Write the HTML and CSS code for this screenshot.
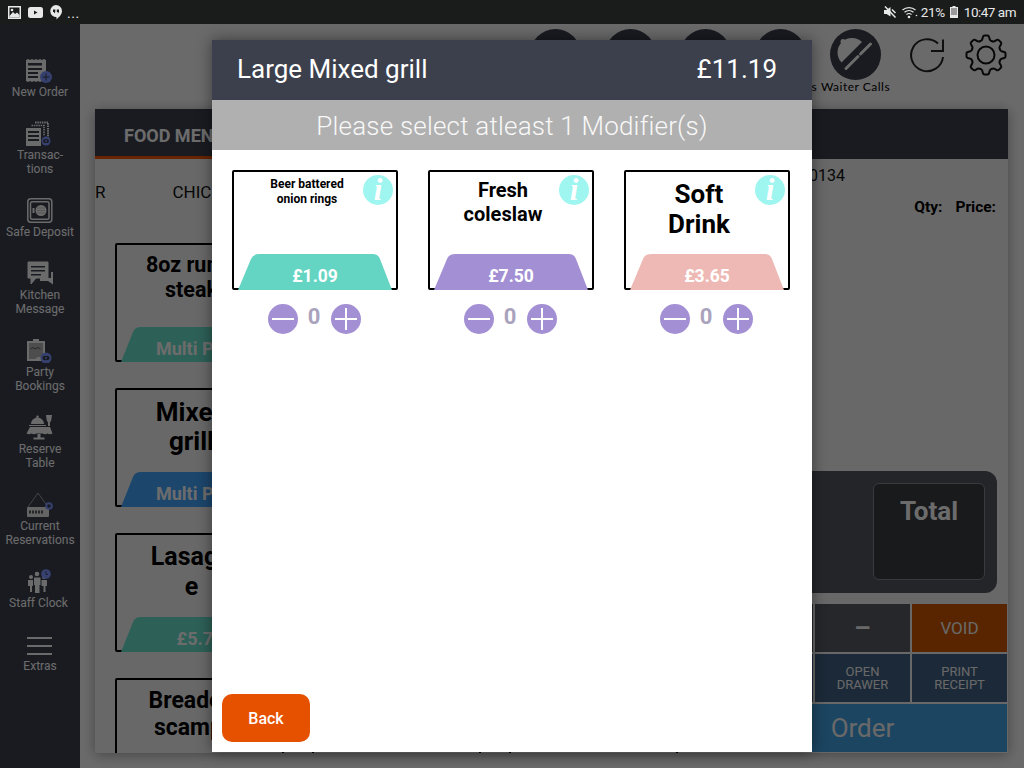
FILE: index.html
```html
<!DOCTYPE html>
<html lang="en">
<head>
<meta charset="utf-8">
<title>Large Mixed grill</title>
<link rel="stylesheet" href="styles.css">
</head>
<body>
<div class="screen">
  <div class="status">
    <div class="status-left">
      <svg class="st-ic" width="13" height="13" viewBox="0 0 13 13"><path d="M0 0H13V13H0Z" fill="#e8e8e8"/><path d="M1.5 1.5H11.500V11.500H1.500Z" fill="#1a1c1c"/><path d="M1.500 10L5 6L7 8L9 6.500L11.500 9V11.500H1.500Z" fill="#e8e8e8"/><circle cx="4" cy="4" r="1.300" fill="#e8e8e8"/></svg>
      <svg class="st-ic" width="15" height="11" viewBox="0 0 15 11"><rect width="15" height="11" rx="2.500" fill="#e8e8e8"/><path d="M6 3.500L9.500 5.500L6 7.500Z" fill="#1a1c1c"/></svg>
      <svg class="st-ic" width="12" height="15" viewBox="0 0 12 15"><path d="M6 0A6 6 0 0 1 12 6C12 9.500 9 12 6.500 14.500V12A6 6 0 0 1 6 0Z" fill="#e8e8e8"/><path d="M3 4.500H5.300V7L4 8.500V7H3ZM6.800 4.500H9V7L7.800 8.500V7H6.800Z" fill="#1a1c1c"/></svg>
      <span class="st-more">...</span>
    </div>
    <div class="status-right">
      <svg class="st-mute" width="12" height="12" viewBox="0 0 12 12"><path d="M0 4H2.500L6.500 1V10.500L2.500 8H0Z" fill="#e8e8e8"/><path d="M1 0.500L11.500 11.500" stroke="#e8e8e8" stroke-width="1.500"/><path d="M8 3.500L11.500 7" stroke="#e8e8e8" stroke-width="1.500"/></svg>
      <svg class="st-wifi" width="16" height="13" viewBox="0 0 16 13"><g fill="none" stroke="#e8e8e8" stroke-width="1.200"><path d="M0.500 4A10 10 0 0 1 13.500 4"/><path d="M2.500 6.300A7 7 0 0 1 11.500 6.300"/><path d="M4.500 8.500A4 4 0 0 1 9.500 8.500"/></g><circle cx="7" cy="11" r="1.300" fill="#e8e8e8"/><circle cx="14.500" cy="9.500" r="0.800" fill="#e8e8e8"/></svg>
      <span class="st-pct">21%</span>
      <svg class="st-batt" width="8" height="12" viewBox="0 0 8 12"><path d="M2.500 0H5.500V1H8V12H0V1H2.500Z" fill="#e8e8e8"/><path d="M1 2H7V9H1Z" fill="#9a9a9a"/></svg>
      <span class="st-time">10:47 am</span>
    </div>
  </div>

  <div class="app">
    <nav class="side">
      <div class="side-item">
        <svg class="side-ic" width="30" height="25" viewBox="0 0 30 25"><path d="M1 2L3 1L5 2L7 1L9 2L11 1L13 2L15 1L17 2L19 1L21 2V23L19 24L17 23L15 24L13 23L11 24L9 23L7 24L5 23L3 24L1 23Z" fill="#eee"/><path d="M3 5H17V7.500H3ZM3 10H17V12H3ZM3 14H13V16H3ZM3 18H13V20H3Z" fill="#383c49"/><circle cx="21" cy="19" r="6" fill="#7b91f5"/><path d="M21 15.500V22.500M17.500 19H24.500" stroke="#383c49" stroke-width="1"/></svg>
        <span>New Order</span>
      </div>
      <div class="side-item">
        <svg class="side-ic" width="30" height="25" viewBox="0 0 30 25"><path d="M10 1.500H23V17" fill="none" stroke="#eee" stroke-width="2" stroke-dasharray="1.500 .8"/><path d="M6.500 4.500H19V15" fill="none" stroke="#eee" stroke-width="1.500" stroke-dasharray="1.500 .8"/><path d="M1 7H16V25H1Z" fill="#eee"/><path d="M3 10H14V12H3ZM3 14H14V16H3ZM3 18H14V20H3Z" fill="#383c49"/><circle cx="21" cy="20" r="4.500" fill="#7b91f5"/><ellipse cx="21" cy="20" rx="3" ry="2" fill="#383c49"/><circle cx="21" cy="20" r="1" fill="#7b91f5"/></svg>
        <span>Transac-<br>tions</span>
      </div>
      <div class="side-item">
        <svg class="side-ic" width="30" height="25" viewBox="0 0 30 25"><rect x="2.800" y="0.800" width="24" height="23.500" rx="3" fill="none" stroke="#eee" stroke-width="1.500"/><rect x="5.500" y="3.800" width="18.500" height="17.500" rx="1.500" fill="none" stroke="#eee" stroke-width="1.500"/><circle cx="16" cy="12.500" r="5.500" fill="#eee"/><rect x="7.500" y="10" width="2" height="5" fill="#eee"/><path d="M12 10H20M12 12.500H20M12 15H20" stroke="#aaa" stroke-width=".7"/></svg>
        <span>Safe Deposit</span>
      </div>
      <div class="side-item">
        <svg class="side-ic" width="30" height="25" viewBox="0 0 30 25"><path d="M26 11H28V23.500L23 20H15V17H26Z" fill="#eee"/><path d="M3 1H23V17H11L6 23V17H3Z" fill="#eee" stroke="#eee" stroke-linejoin="round"/><path d="M6 5H20V6.500H6ZM6 9H20V10.500H6ZM6 13H16V14.500H6Z" fill="#383c49"/></svg>
        <span>Kitchen<br>Message</span>
      </div>
      <div class="side-item">
        <svg class="side-ic" width="30" height="25" viewBox="0 0 30 25"><path d="M2 3H8V1H14V3H20V23H2Z" fill="#eee"/><path d="M4 5H18V19H13L10 21H4Z" fill="#aaa"/><path d="M5.500 11L8 9.500L10 11L13 9.500L15.500 11" fill="none" stroke="#444" stroke-width=".8"/><circle cx="21" cy="20" r="5.500" fill="#7b91f5"/><ellipse cx="21" cy="20" rx="3.500" ry="2.200" fill="#383c49"/><circle cx="21" cy="20" r="1" fill="#7b91f5"/></svg>
        <span>Party<br>Bookings</span>
      </div>
      <div class="side-item">
        <svg class="side-ic" width="30" height="25" viewBox="0 0 30 25"><path d="M6 9A6.500 6.500 0 0 1 19 9Z" fill="#eee"/><circle cx="12.500" cy="1.800" r="1.300" fill="#eee"/><path d="M4 10H21V11H4Z" fill="#eee"/><path d="M5 12H25L27.500 18.500Q25 20 22.500 18.500Q20 20 17.500 18.500H11.500Q9 20 6.500 18.500Q4 20 1.500 18.500Z" fill="#eee"/><path d="M12.500 19H15.500V22.500H12.500ZM8.500 22.500H19.500V24.500H8.500Z" fill="#eee"/><path d="M21 0H27L26.300 5Q26 7 25 7V11H23V7Q22 7 21.700 5Z" fill="#eee"/></svg>
        <span>Reserve<br>Table</span>
      </div>
      <div class="side-item">
        <svg class="side-ic" width="30" height="25" viewBox="0 0 30 25"><path d="M3 15L13 1L23 15" fill="none" stroke="#bbb" stroke-width=".7"/><rect x="2" y="15" width="22" height="10" rx="1" fill="#ddd"/><path d="M4 18.500H6V21.500H4ZM7 18.500H9V21.500H7ZM10 18.500H12V21.500H10ZM13 18.500H15V21.500H13ZM16 18.500H18V21.500H16Z" fill="#555"/><circle cx="24" cy="14" r="3.800" fill="#7b91f5"/><circle cx="24" cy="14" r="1.800" fill="#383c49"/></svg>
        <span>Current<br>Reservations</span>
      </div>
      <div class="side-item">
        <svg class="side-ic" width="30" height="25" viewBox="0 0 30 25"><circle cx="12" cy="5" r="2.300" fill="#eee"/><circle cx="6" cy="8" r="2" fill="#eee"/><circle cx="19" cy="8" r="2" fill="#eee"/><path d="M9 8.500H15.500V16H14.500V24H10V16H9Z" fill="#eee"/><path d="M3 11H8V17H7V23H5V17H3ZM16.500 11H22V17H20.500V23H18.500V17H16.500Z" fill="#eee"/><circle cx="21" cy="5" r="4.800" fill="#7b91f5"/><path d="M21 2.500V5.500H23" fill="none" stroke="#383c49" stroke-width=".9"/></svg>
        <span class="staff-label">Staff Clock</span>
      </div>
      <div class="side-item">
        <svg class="side-ic" width="30" height="25" viewBox="0 0 30 25"><path d="M2 5H27V7H2ZM2 13H27V15H2ZM2 21H27V23H2Z" fill="#eee"/></svg>
        <span>Extras</span>
      </div>
    </nav>

    <main class="main">
      <header class="tools">
        <div class="tool"><div class="tool-disc"></div></div>
        <div class="tool"><div class="tool-disc"></div></div>
        <div class="tool"><div class="tool-disc"></div></div>
        <div class="tool"><div class="tool-disc"></div><span class="tool-label">Reservations</span></div>
        <div class="tool">
          <div class="tool-disc">
            <svg width="51" height="51" viewBox="0 0 51 51"><path d="M11.500 33.500A14.500 14.500 0 0 1 32 13Z" fill="#f0f0f0"/><circle cx="13" cy="12.500" r="2.500" fill="#f0f0f0"/><path d="M16 39.500L28 27.500M30.500 25L40.500 15" stroke="#f0f0f0" stroke-width="3" stroke-linecap="round"/></svg>
          </div>
          <span class="tool-label">Waiter Calls</span>
        </div>
        <svg class="refresh" width="36" height="36" viewBox="0 0 36 36"><path d="M34 20A16 16 0 1 1 29 6.500M34 2.500V14H22" fill="none" stroke="#222" stroke-width="2"/></svg>
        <svg class="gear" width="42" height="42" viewBox="-21 -21 42 42"><defs><path id="tooth" d="M-5.740-13.860Q-4-14.500-3.800-15.500L-3-18.300Q-2.700-19.500-1.500-19.500H1.500Q2.700-19.500 3-18.300L3.800-15.500Q4-14.500 5.740-13.860"/></defs><g fill="none" stroke="#111" stroke-width="2" stroke-linecap="round"><use href="#tooth"/><use href="#tooth" transform="rotate(45)"/><use href="#tooth" transform="rotate(90)"/><use href="#tooth" transform="rotate(135)"/><use href="#tooth" transform="rotate(180)"/><use href="#tooth" transform="rotate(225)"/><use href="#tooth" transform="rotate(270)"/><use href="#tooth" transform="rotate(315)"/><circle r="8.500"/></g></svg>
      </header>

      <section class="panel">
        <div class="tabs"><div class="tab">FOOD MENU</div></div>
        <div class="panel-body">
          <div class="menu">
            <div class="cats"><span class="cat">R</span><span class="cat">CHICKEN</span></div>
            <div class="grid">
              <div class="card"><div class="card-name n22">8oz rump<br>steak</div><div class="band teal">Multi Price</div></div>
              <div class="card"></div><div class="card"></div>
              <div class="card"><div class="card-name n26">Mixed<br>grill</div><div class="band blue">Multi Price</div></div>
              <div class="card"></div><div class="card"></div>
              <div class="card"><div class="card-name n25">Lasagn<br>e</div><div class="band teal">£5.75</div></div>
              <div class="card"></div><div class="card"></div>
              <div class="card"><div class="card-name n23">Breaded<br>scampi</div></div>
              <div class="card"></div><div class="card"></div>
            </div>
          </div>
          <aside class="order">
            <div class="order-ref">0134</div>
            <div class="order-cols"><span>Qty:</span><span>Price:</span></div>
            <div class="totals"><div class="total-box">Total</div></div>
            <div class="keys">
              <div class="key k-grey">+</div>
              <div class="key k-grey k-big">–</div>
              <div class="key k-void">VOID</div>
              <div class="key k-navy">DISCOUNT</div>
              <div class="key k-navy">OPEN<br>DRAWER</div>
              <div class="key k-navy">PRINT<br>RECEIPT</div>
              <div class="key k-order">Order</div>
            </div>
          </aside>
        </div>
      </section>
    </main>
  </div>

  <div class="scrim"></div>

  <div class="modal">
    <div class="m-head"><span>Large Mixed grill</span><span class="m-price">£11.19</span></div>
    <div class="m-sub">Please select atleast 1 Modifier(s)</div>
    <div class="m-body">
      <div class="mods">
        <div class="mod">
          <div class="mod-card">
            <div class="mod-name s12">Beer battered<br>onion rings</div>
            <div class="info">i</div>
            <div class="price p-teal">£1.09</div>
          </div>
          <div class="stepper">
            <svg class="step" width="30" height="30" viewBox="0 0 30 30"><circle cx="15" cy="15" r="15" fill="#a38fd3"/><path d="M4 15H26" stroke="#fff" stroke-width="2"/></svg>
            <span class="qty">0</span>
            <svg class="step" width="30" height="30" viewBox="0 0 30 30"><circle cx="15" cy="15" r="15" fill="#a38fd3"/><path d="M4 15H26M15 4V26" stroke="#fff" stroke-width="2"/></svg>
          </div>
        </div>
        <div class="mod">
          <div class="mod-card">
            <div class="mod-name s20">Fresh<br>coleslaw</div>
            <div class="info">i</div>
            <div class="price p-purple">£7.50</div>
          </div>
          <div class="stepper">
            <svg class="step" width="30" height="30" viewBox="0 0 30 30"><circle cx="15" cy="15" r="15" fill="#a38fd3"/><path d="M4 15H26" stroke="#fff" stroke-width="2"/></svg>
            <span class="qty">0</span>
            <svg class="step" width="30" height="30" viewBox="0 0 30 30"><circle cx="15" cy="15" r="15" fill="#a38fd3"/><path d="M4 15H26M15 4V26" stroke="#fff" stroke-width="2"/></svg>
          </div>
        </div>
        <div class="mod">
          <div class="mod-card">
            <div class="mod-name s26">Soft<br>Drink</div>
            <div class="info">i</div>
            <div class="price p-pink">£3.65</div>
          </div>
          <div class="stepper">
            <svg class="step" width="30" height="30" viewBox="0 0 30 30"><circle cx="15" cy="15" r="15" fill="#a38fd3"/><path d="M4 15H26" stroke="#fff" stroke-width="2"/></svg>
            <span class="qty">0</span>
            <svg class="step" width="30" height="30" viewBox="0 0 30 30"><circle cx="15" cy="15" r="15" fill="#a38fd3"/><path d="M4 15H26M15 4V26" stroke="#fff" stroke-width="2"/></svg>
          </div>
        </div>
      </div>
      <button class="back">Back</button>
    </div>
  </div>
</div>
</body>
</html>
```
FILE: styles.css
```css
* { box-sizing: border-box; }
html, body { margin: 0; padding: 0; }
body { font-family: Roboto, "Liberation Sans", sans-serif; background: #000; }
.screen { position: relative; width: 1024px; height: 768px; overflow: hidden; background: #ececec; }

/* status bar */
.status { position: relative; z-index: 3; height: 24px; background: #1a1c1c; display: flex; justify-content: space-between; align-items: center; padding: 0 8px; color: #e8e8e8; }
.status-left { display: flex; align-items: center; gap: 7px; }
.st-more { font-size: 14px; line-height: 14px; margin-left: -2px; margin-top: 2px; letter-spacing: .5px; }
.status-right { display: flex; align-items: center; }
.st-wifi { margin-left: 6px; }
.st-pct { font-size: 13.500px; margin-left: 3px; letter-spacing: -.3px; }
.st-batt { margin-left: 5px; }
.st-time { font-size: 13.500px; margin-left: 6px; letter-spacing: -.5px; }

/* app shell */
.app { display: flex; height: 744px; }
.side { width: 80px; flex: none; background: #383c49; display: flex; flex-direction: column; align-items: center; gap: 22px; padding-top: 34px; }
.side-item { display: flex; flex-direction: column; align-items: center; color: #f0f0f0; font-size: 12px; line-height: 14px; text-align: center; white-space: nowrap; }
.side-ic { display: block; margin-bottom: 2px; }
.staff-label { margin-right: 3px; }
.main { flex: 1; min-width: 0; display: flex; flex-direction: column; }

/* top tools */
.tools { height: 85px; flex: none; display: flex; justify-content: flex-end; align-items: flex-start; padding: 5px 17px 0 0; }
.tool { width: 75px; display: flex; flex-direction: column; align-items: center; }
.tool-disc { width: 51px; height: 51px; border-radius: 50%; background: #383c49; }
.tool-disc svg { display: block; }
.tool-label { font-family: Lato, sans-serif; font-size: 12px; line-height: 14px; font-weight: 400; color: #000; white-space: nowrap; letter-spacing: .5px; }
.refresh { margin: 8px 0 0 16px; }
.gear { margin: 5px 0 0 20px; }

/* background panel */
.panel { margin-left: 15px; width: 913px; height: 644px; background: #e6e6e6; box-shadow: 0 2px 12px rgba(0,0,0,.35); display: flex; flex-direction: column; overflow: hidden; }
.tabs { height: 50px; flex: none; background: #383c49; }
.tab { width: 220px; height: 50px; padding: 2px 0 0 29px; line-height: 50px; border-bottom: 3px solid #e65100; color: #f0f0f0; font-size: 18px; font-weight: 700; white-space: nowrap; overflow: hidden; }
.panel-body { flex: 1; display: flex; min-height: 0; }
.menu { width: 624px; flex: none; overflow: hidden; }
.cats { height: 84px; display: flex; gap: 67px; font-size: 17px; color: #111; padding-top: 24px; line-height: 19px; }
.grid { display: grid; grid-template-columns: repeat(3, 169px); column-gap: 28px; row-gap: 26px; padding-left: 20px; }
.card { height: 119px; border: 2px solid #000; border-radius: 2px; display: flex; flex-direction: column; justify-content: space-between; position: relative; }
.card-name { padding: 7px 16px 0 0; text-align: center; font-weight: 700; color: #000; }
.n22 { font-size: 21.500px; line-height: 25px; padding-top: 7px; }
.n26 { font-size: 26px; line-height: 29px; padding-top: 8px; }
.n25 { font-size: 25px; line-height: 30px; padding-top: 7px; }
.n23 { font-size: 23px; line-height: 27px; padding-top: 7px; }
.band { width: 154px; height: 35px; margin: 0 0 -2px 4px; color: #f0f0f0; font-size: 18px; font-weight: 700; text-align: center; line-height: 44px; text-indent: 4px; clip-path: path('M0 35L12 5Q14 0 20 0H135Q140 0 142 5L154 35Z'); }
.teal { background: #64d6c2; }
.blue { background: #3f9bf0; }

/* order column */
.order { flex: 1; min-width: 0; display: flex; flex-direction: column; padding-right: 1px; }
.order-ref { font-size: 16px; line-height: 19px; color: #111; padding-top: 7px; text-align: right; padding-right: 162px; height: 40px; }
.order-cols { display: flex; justify-content: flex-end; gap: 13px; font-size: 15.500px; font-weight: 700; color: #000; padding-right: 11px; line-height: 17px; }
.totals { height: 122px; margin: 255px 10px 11px 0; background: #50525b; border-radius: 0 12px 12px 0; padding: 12px 12px 0 0; display: flex; justify-content: flex-end; }
.total-box { width: 112px; height: 97px; border: 1px solid #80828a; border-radius: 6px; background: #383a3f; color: #f0f0f0; font-size: 26px; font-weight: 700; text-align: center; padding-top: 10px; line-height: 34px; }
.keys { display: grid; grid-template-columns: repeat(3, 95px); grid-auto-rows: 48px; gap: 2px; margin-left: -1px; }
.key { display: flex; align-items: center; justify-content: center; text-align: center; color: #e8e8e8; font-size: 13px; line-height: 13px; }
.k-grey { background: #55575f; font-size: 22px; font-weight: 700; }
.k-big { font-size: 26px; }
.k-void { background: #c35300; font-size: 17px; }
.k-navy { background: #3c5c7c; }
.k-order { grid-column: span 3; background: #3f9ad8; font-size: 26px; line-height: 30px; }

/* dim layer + modal */
.scrim { position: absolute; left: 0; right: 0; top: 24px; bottom: 0; background: rgba(0,0,0,.55); z-index: 1; }
.modal { position: absolute; z-index: 2; left: 212px; top: 40px; width: 600px; height: 712px; background: #fff; box-shadow: 0 0 14px rgba(0,0,0,.45); display: flex; flex-direction: column; }
.m-head { height: 60px; flex: none; background: #3c404c; color: #fff; display: flex; justify-content: space-between; align-items: center; padding: 0 35px 2px 25px; font-size: 26px; line-height: 30px; }
.m-sub { height: 50px; flex: none; background: #b0b0b0; color: #f8f8f8; text-align: center; font-size: 26px; line-height: 52px; font-weight: 300; letter-spacing: .2px; }
.m-body { flex: 1; display: flex; flex-direction: column; justify-content: space-between; padding: 20px 0 10px 10px; min-height: 0; }
.mods { display: flex; gap: 30px; padding-left: 10px; }
.mod { width: 166px; display: flex; flex-direction: column; align-items: center; }
.mod-card { position: relative; width: 166px; height: 120px; border: 2px solid #000; border-radius: 2px; display: flex; flex-direction: column; justify-content: space-between; align-items: center; }
.mod-name { width: 100%; padding: 0 16px 0 0; text-align: center; font-weight: 700; color: #000; }
.s12 { font-size: 12px; line-height: 15px; padding-top: 5px; }
.s20 { font-size: 20px; line-height: 24px; padding-top: 6px; }
.s26 { font-size: 26px; line-height: 30px; padding-top: 7px; }
.info { position: absolute; right: 3px; top: 3px; width: 30px; height: 30px; border-radius: 50%; background: #9ff5ef; color: #fff; font-family: "Liberation Serif", serif; font-style: italic; font-weight: 700; font-size: 31px; line-height: 30px; text-align: center; }
.price { width: 154px; height: 36px; margin-bottom: -2px; flex: none; color: #fff; font-size: 17.500px; font-weight: 700; text-align: center; line-height: 44px; clip-path: path('M0 36L13 5Q15 0 21 0H135Q140 0 142 5L154 36Z'); }
.p-teal { background: #64d5c2; }
.p-purple { background: #a38fd3; }
.p-pink { background: #eeb9b4; }
.stepper { display: flex; align-items: flex-start; margin-top: 14px; height: 30px; padding-right: 2px; }
.step { display: block; }
.qty { width: 33px; text-align: center; font-size: 22px; font-weight: 700; color: #aaa3bd; line-height: 26px; }
.back { align-self: flex-start; width: 88px; height: 48px; border: 0; border-radius: 10px; background: #e65100; color: #fff; font-family: inherit; font-size: 16px; font-weight: 500; }
```
